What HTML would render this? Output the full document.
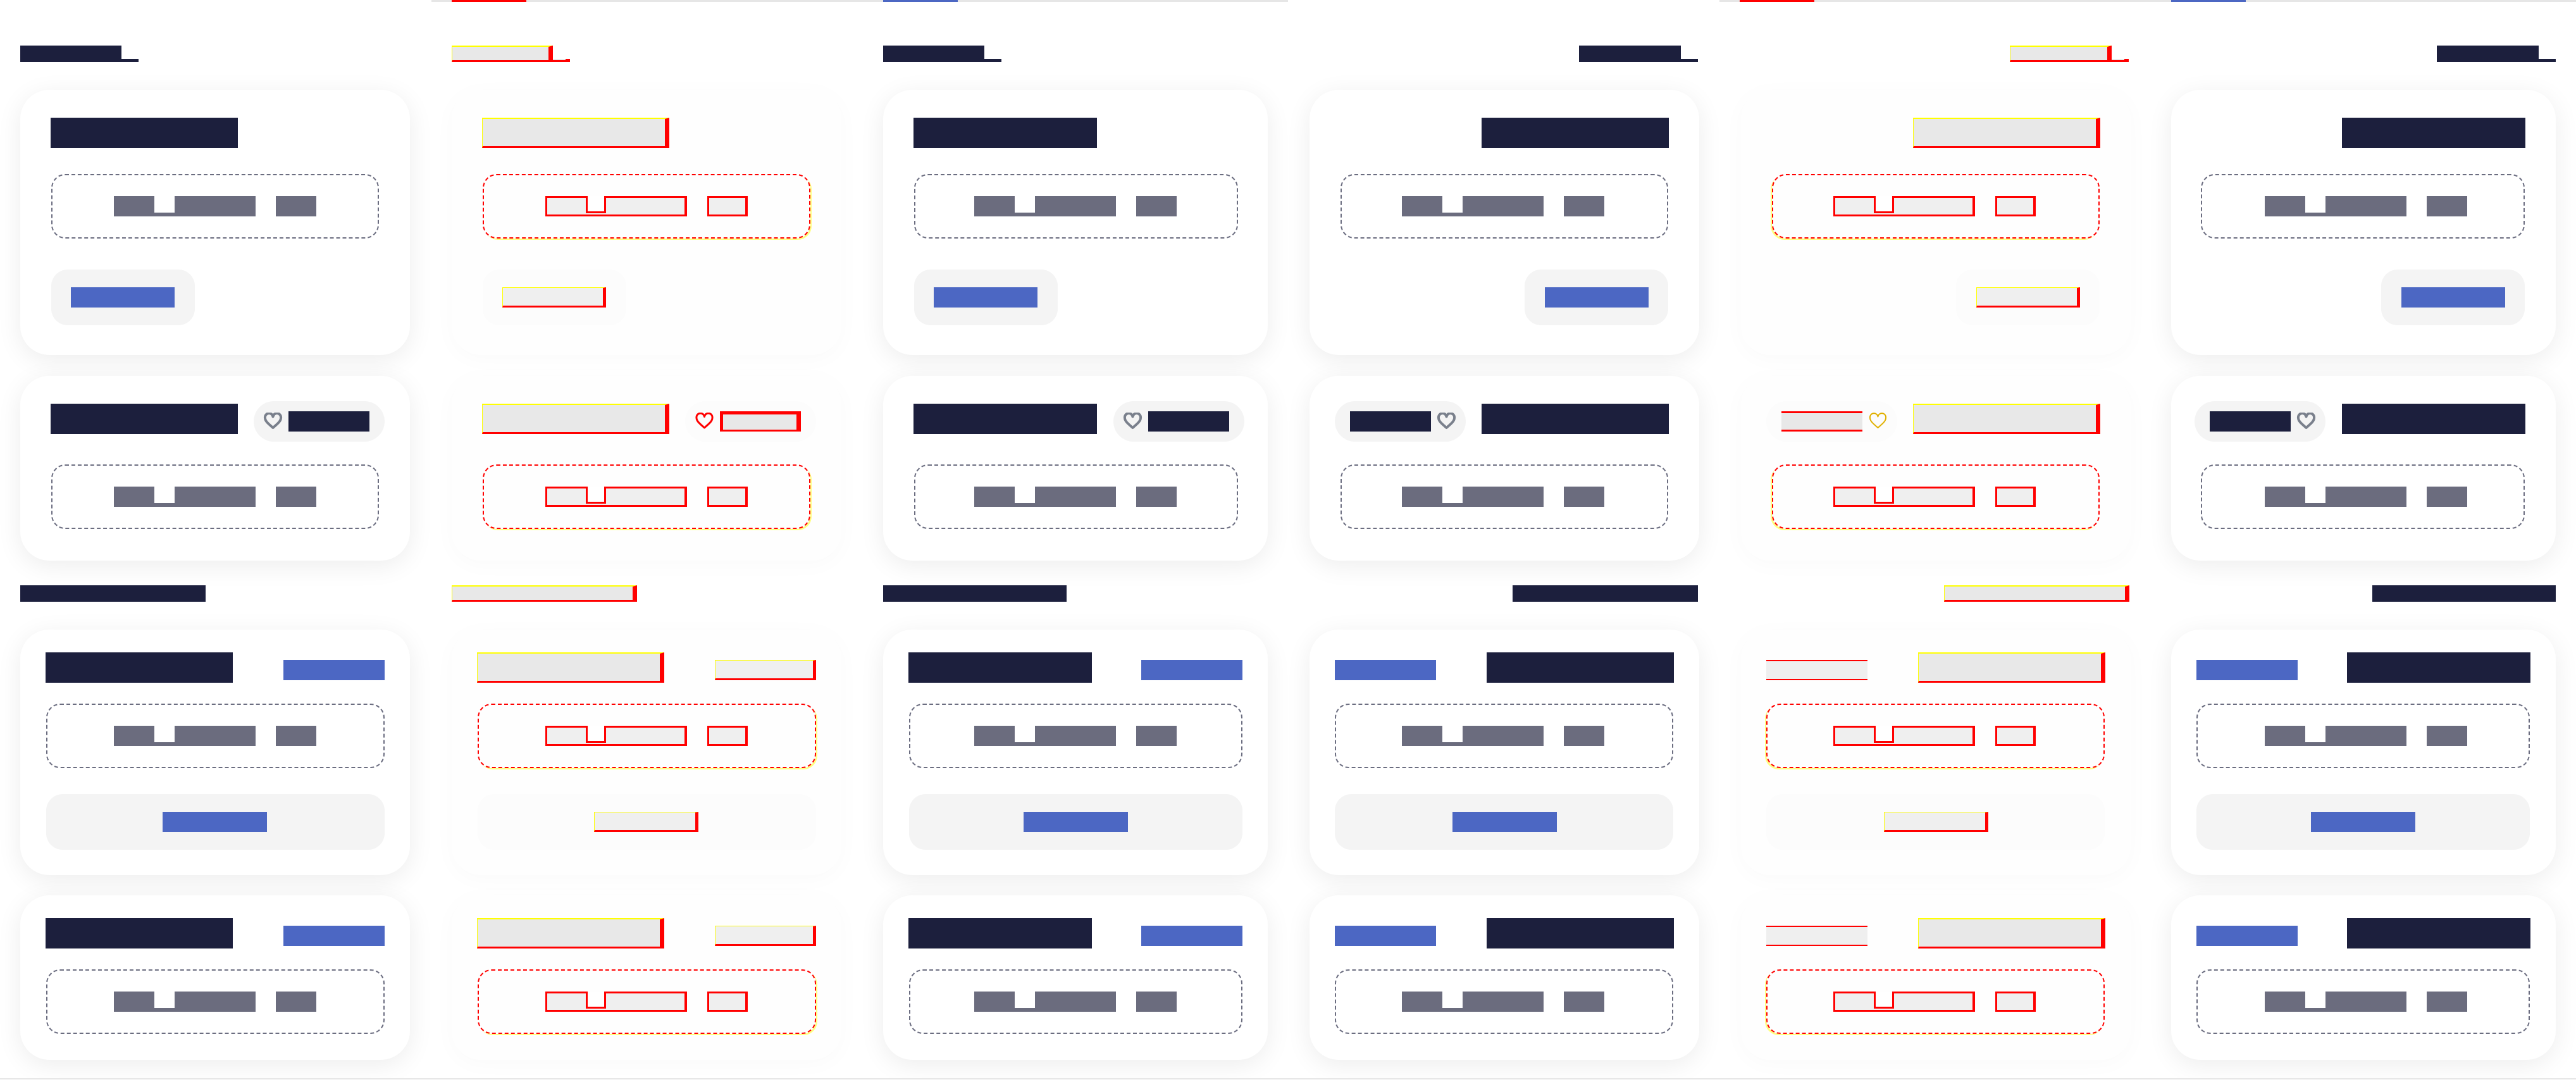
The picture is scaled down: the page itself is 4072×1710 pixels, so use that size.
<!DOCTYPE html>
<html><head><style>
*{box-sizing:border-box;margin:0;padding:0}
html,body{width:4072px;height:1710px;background:#fff;overflow:hidden;position:relative}
.p{position:absolute;top:0;height:1706px;width:682px;background:#fff;overflow:hidden;border-bottom:2px solid #e6e6e6}
.p>div,.p .c>div{position:absolute}
.rtl{transform:scaleX(-1)}
.rtl .l{transform:scaleX(-1)}
.top{top:0;left:0;width:100%;height:3px;background:#e6e6e6}
.top i{position:absolute;left:32px;top:0;width:118px;height:3px}
.h{background:#1c1f3d}
.tail{background:#1c1f3d}
.card{background:#fff;border-radius:46px;box-shadow:0 8px 40px rgba(0,0,0,.075)}
.t{background:#1c1f3d}
.ds{border:2px dashed #6b6d80;border-radius:22px}
.ba{background:#6b6c7e}
.ba b{position:absolute;left:64px;top:0;width:32px;height:26px;background:#fff}
.bb{background:#6b6c7e}
.btn{background:#f4f4f4;border-radius:26px}
.bl{background:#4c67c3}
.pill{background:#f4f4f4;border-radius:32px}
.dk{background:#1c1f3d}
.hrt{width:31px;height:27px}
.hrt path{stroke:#7a808c}
.d .h,.d .t,.d .tail{background:#e8e8e8;border-top:2px solid #ff0;border-left:1px solid #ff0;border-right:7px solid #f00;border-bottom:3px solid #f00}
.d .tail{border-left:none;border-top:none}
.d .card{box-shadow:0 6px 36px rgba(0,0,0,.025);background:#fefefe}
.d .ds{border:2px dashed #f00;box-shadow:2px 2px 0 0 rgba(255,255,0,.5)}
.d .ba,.d .bb{background:#efefef;border:3px solid #f00;border-right-width:4px}
.d .ba b{left:61px;top:-3px;height:27px;width:32px;border:3px solid #f00;border-top:none;background:#fff}
.d .btn,.d .pill{background:#fcfcfc}
.d .bl{background:#efefef;border-top:1px solid #ff0;border-left:1px solid #ff0;border-bottom:3px solid #f00;border-right:5px solid #f00}
.d .dk{background:#e8e8e8;border:3px solid #f00;border-top:5px solid #f00;border-left:5px solid #f00;border-right:7px solid #f00}
.d .hrt path{stroke:#f00}
</style></head><body>

<div class="p" style="left:0">
 <div class="l h" style="left:32px;top:72px;width:160px;height:26px"></div>
 <div class="l tail" style="left:192px;top:93px;width:27px;height:5px"></div>
 <div class="card" style="left:32px;top:142px;width:616px;height:419px"></div>
 <div class="l t" style="left:80px;top:186px;width:296px;height:48px"></div>
 <div class="ds" style="left:81px;top:275px;width:518px;height:102px"></div>
 <div class="l ba" style="left:180px;top:310px;width:224px;height:32px"><b></b></div>
 <div class="l bb" style="left:436px;top:310px;width:64px;height:32px"></div>
 <div class="btn" style="left:81px;top:426px;width:227px;height:88px"></div>
 <div class="l bl" style="left:112px;top:454px;width:164px;height:32px"></div>
 <div class="card" style="left:32px;top:594px;width:616px;height:292px"></div>
 <div class="l t" style="left:80px;top:638px;width:296px;height:48px"></div>
 <div class="pill" style="left:401px;top:634px;width:207px;height:64px"></div>
 <div style="left:416px;top:652px"><svg class="hrt" viewBox="0 0 31 27"><path d="M15.5 24 C8 17.5 3 13.5 3 8.5 A6 6 0 0 1 15.5 6.5 A6 6 0 0 1 28 8.5 C28 13.5 23 17.5 15.5 24Z" fill="none" stroke-width="4" stroke-linejoin="round"/></svg></div>
 <div class="l dk" style="left:456px;top:650px;width:128px;height:32px"></div>
 <div class="ds" style="left:81px;top:734px;width:518px;height:102px"></div>
 <div class="l ba" style="left:180px;top:769px;width:224px;height:32px"><b></b></div>
 <div class="l bb" style="left:436px;top:769px;width:64px;height:32px"></div>
 <div class="l h" style="left:32px;top:925px;width:293px;height:26px"></div>
 <div class="card" style="left:32px;top:995px;width:616px;height:388px"></div>
 <div class="l t" style="left:72px;top:1031px;width:296px;height:48px"></div>
 <div class="l bl" style="left:448px;top:1043px;width:160px;height:32px"></div>
 <div class="ds" style="left:73px;top:1112px;width:535px;height:102px"></div>
 <div class="l ba" style="left:180px;top:1147px;width:224px;height:32px"><b></b></div>
 <div class="l bb" style="left:436px;top:1147px;width:64px;height:32px"></div>
 <div class="btn" style="left:73px;top:1255px;width:535px;height:88px"></div>
 <div class="l bl" style="left:257px;top:1283px;width:165px;height:32px"></div>
 <div class="card" style="left:32px;top:1415px;width:616px;height:260px"></div>
 <div class="l t" style="left:72px;top:1451px;width:296px;height:48px"></div>
 <div class="l bl" style="left:448px;top:1463px;width:160px;height:32px"></div>
 <div class="ds" style="left:73px;top:1532px;width:535px;height:102px"></div>
 <div class="l ba" style="left:180px;top:1567px;width:224px;height:32px"><b></b></div>
 <div class="l bb" style="left:436px;top:1567px;width:64px;height:32px"></div>
</div>

<div class="p d" style="left:682px">
 <div class="top"><i style="background:#f00"></i></div>
 <div class="l h" style="left:32px;top:72px;width:160px;height:26px"></div>
 <div class="l tail" style="left:192px;top:93px;width:27px;height:5px"></div>
 <div class="card" style="left:32px;top:142px;width:616px;height:419px"></div>
 <div class="l t" style="left:80px;top:186px;width:296px;height:48px"></div>
 <div class="ds" style="left:81px;top:275px;width:518px;height:102px"></div>
 <div class="l ba" style="left:180px;top:310px;width:224px;height:32px"><b></b></div>
 <div class="l bb" style="left:436px;top:310px;width:64px;height:32px"></div>
 <div class="btn" style="left:81px;top:426px;width:227px;height:88px"></div>
 <div class="l bl" style="left:112px;top:454px;width:164px;height:32px"></div>
 <div class="card" style="left:32px;top:594px;width:616px;height:292px"></div>
 <div class="l t" style="left:80px;top:638px;width:296px;height:48px"></div>
 <div class="pill" style="left:401px;top:634px;width:207px;height:64px"></div>
 <div style="left:416px;top:652px"><svg class="hrt" viewBox="0 0 31 27"><path d="M15.5 24 C8 17.5 3 13.5 3 8.5 A6 6 0 0 1 15.5 6.5 A6 6 0 0 1 28 8.5 C28 13.5 23 17.5 15.5 24Z" fill="none" stroke-width="3" stroke-linejoin="round"/></svg></div>
 <div class="l dk" style="left:456px;top:650px;width:128px;height:32px"></div>
 <div class="ds" style="left:81px;top:734px;width:518px;height:102px"></div>
 <div class="l ba" style="left:180px;top:769px;width:224px;height:32px"><b></b></div>
 <div class="l bb" style="left:436px;top:769px;width:64px;height:32px"></div>
 <div class="l h" style="left:32px;top:925px;width:293px;height:26px"></div>
 <div class="card" style="left:32px;top:995px;width:616px;height:388px"></div>
 <div class="l t" style="left:72px;top:1031px;width:296px;height:48px"></div>
 <div class="l bl" style="left:448px;top:1043px;width:160px;height:32px"></div>
 <div class="ds" style="left:73px;top:1112px;width:535px;height:102px"></div>
 <div class="l ba" style="left:180px;top:1147px;width:224px;height:32px"><b></b></div>
 <div class="l bb" style="left:436px;top:1147px;width:64px;height:32px"></div>
 <div class="btn" style="left:73px;top:1255px;width:535px;height:88px"></div>
 <div class="l bl" style="left:257px;top:1283px;width:165px;height:32px"></div>
 <div class="card" style="left:32px;top:1415px;width:616px;height:260px"></div>
 <div class="l t" style="left:72px;top:1451px;width:296px;height:48px"></div>
 <div class="l bl" style="left:448px;top:1463px;width:160px;height:32px"></div>
 <div class="ds" style="left:73px;top:1532px;width:535px;height:102px"></div>
 <div class="l ba" style="left:180px;top:1567px;width:224px;height:32px"><b></b></div>
 <div class="l bb" style="left:436px;top:1567px;width:64px;height:32px"></div>
</div>

<div class="p" style="left:1364px;width:672px">
 <div class="top"><i style="background:#4c67c3"></i></div>
 <div class="l h" style="left:32px;top:72px;width:160px;height:26px"></div>
 <div class="l tail" style="left:192px;top:93px;width:27px;height:5px"></div>
 <div class="card" style="left:32px;top:142px;width:608px;height:419px"></div>
 <div class="l t" style="left:80px;top:186px;width:290px;height:48px"></div>
 <div class="ds" style="left:81px;top:275px;width:512px;height:102px"></div>
 <div class="l ba" style="left:176px;top:310px;width:224px;height:32px"><b></b></div>
 <div class="l bb" style="left:432px;top:310px;width:64px;height:32px"></div>
 <div class="btn" style="left:81px;top:426px;width:227px;height:88px"></div>
 <div class="l bl" style="left:112px;top:454px;width:164px;height:32px"></div>
 <div class="card" style="left:32px;top:594px;width:608px;height:292px"></div>
 <div class="l t" style="left:80px;top:638px;width:290px;height:48px"></div>
 <div class="pill" style="left:396px;top:634px;width:207px;height:64px"></div>
 <div style="left:411px;top:652px"><svg class="hrt" viewBox="0 0 31 27"><path d="M15.5 24 C8 17.5 3 13.5 3 8.5 A6 6 0 0 1 15.5 6.5 A6 6 0 0 1 28 8.5 C28 13.5 23 17.5 15.5 24Z" fill="none" stroke-width="4" stroke-linejoin="round"/></svg></div>
 <div class="l dk" style="left:451px;top:650px;width:128px;height:32px"></div>
 <div class="ds" style="left:81px;top:734px;width:512px;height:102px"></div>
 <div class="l ba" style="left:176px;top:769px;width:224px;height:32px"><b></b></div>
 <div class="l bb" style="left:432px;top:769px;width:64px;height:32px"></div>
 <div class="l h" style="left:32px;top:925px;width:290px;height:26px"></div>
 <div class="card" style="left:32px;top:995px;width:608px;height:388px"></div>
 <div class="l t" style="left:72px;top:1031px;width:290px;height:48px"></div>
 <div class="l bl" style="left:440px;top:1043px;width:160px;height:32px"></div>
 <div class="ds" style="left:73px;top:1112px;width:527px;height:102px"></div>
 <div class="l ba" style="left:176px;top:1147px;width:224px;height:32px"><b></b></div>
 <div class="l bb" style="left:432px;top:1147px;width:64px;height:32px"></div>
 <div class="btn" style="left:73px;top:1255px;width:527px;height:88px"></div>
 <div class="l bl" style="left:254px;top:1283px;width:165px;height:32px"></div>
 <div class="card" style="left:32px;top:1415px;width:608px;height:260px"></div>
 <div class="l t" style="left:72px;top:1451px;width:290px;height:48px"></div>
 <div class="l bl" style="left:440px;top:1463px;width:160px;height:32px"></div>
 <div class="ds" style="left:73px;top:1532px;width:527px;height:102px"></div>
 <div class="l ba" style="left:176px;top:1567px;width:224px;height:32px"><b></b></div>
 <div class="l bb" style="left:432px;top:1567px;width:64px;height:32px"></div>
</div>

<div class="p rtl" style="left:2036px">
 <div class="l h" style="left:61px;top:72px;width:161px;height:26px"></div>
 <div class="l tail" style="left:34px;top:93px;width:27px;height:5px"></div>
 <div class="card" style="left:32px;top:142px;width:616px;height:419px"></div>
 <div class="l t" style="left:80px;top:186px;width:296px;height:48px"></div>
 <div class="ds" style="left:81px;top:275px;width:518px;height:102px"></div>
 <div class="l ba" style="left:278px;top:310px;width:224px;height:32px"><b></b></div>
 <div class="l bb" style="left:182px;top:310px;width:64px;height:32px"></div>
 <div class="btn" style="left:81px;top:426px;width:227px;height:88px"></div>
 <div class="l bl" style="left:112px;top:454px;width:164px;height:32px"></div>
 <div class="card" style="left:32px;top:594px;width:616px;height:292px"></div>
 <div class="l t" style="left:80px;top:638px;width:296px;height:48px"></div>
 <div class="pill" style="left:401px;top:634px;width:207px;height:64px"></div>
 <div style="left:416px;top:652px"><svg class="hrt" viewBox="0 0 31 27"><path d="M15.5 24 C8 17.5 3 13.5 3 8.5 A6 6 0 0 1 15.5 6.5 A6 6 0 0 1 28 8.5 C28 13.5 23 17.5 15.5 24Z" fill="none" stroke-width="4" stroke-linejoin="round"/></svg></div>
 <div class="l dk" style="left:456px;top:650px;width:128px;height:32px"></div>
 <div class="ds" style="left:81px;top:734px;width:518px;height:102px"></div>
 <div class="l ba" style="left:278px;top:769px;width:224px;height:32px"><b></b></div>
 <div class="l bb" style="left:182px;top:769px;width:64px;height:32px"></div>
 <div class="l h" style="left:34px;top:925px;width:293px;height:26px"></div>
 <div class="card" style="left:32px;top:995px;width:616px;height:388px"></div>
 <div class="l t" style="left:72px;top:1031px;width:296px;height:48px"></div>
 <div class="l bl" style="left:448px;top:1043px;width:160px;height:32px"></div>
 <div class="ds" style="left:73px;top:1112px;width:535px;height:102px"></div>
 <div class="l ba" style="left:278px;top:1147px;width:224px;height:32px"><b></b></div>
 <div class="l bb" style="left:182px;top:1147px;width:64px;height:32px"></div>
 <div class="btn" style="left:73px;top:1255px;width:535px;height:88px"></div>
 <div class="l bl" style="left:257px;top:1283px;width:165px;height:32px"></div>
 <div class="card" style="left:32px;top:1415px;width:616px;height:260px"></div>
 <div class="l t" style="left:72px;top:1451px;width:296px;height:48px"></div>
 <div class="l bl" style="left:448px;top:1463px;width:160px;height:32px"></div>
 <div class="ds" style="left:73px;top:1532px;width:535px;height:102px"></div>
 <div class="l ba" style="left:278px;top:1567px;width:224px;height:32px"><b></b></div>
 <div class="l bb" style="left:182px;top:1567px;width:64px;height:32px"></div>
</div>

<div class="p d rtl" style="left:2718px">
 <div class="top"><i style="background:#f00;left:auto;right:32px"></i></div>
 <div class="l h" style="left:62px;top:72px;width:161px;height:26px"></div>
 <div class="l tail" style="left:35px;top:93px;width:27px;height:5px"></div>
 <div class="card" style="left:32px;top:142px;width:616px;height:419px"></div>
 <div class="l t" style="left:80px;top:186px;width:296px;height:48px"></div>
 <div class="ds" style="left:81px;top:275px;width:518px;height:102px"></div>
 <div class="l ba" style="left:278px;top:310px;width:224px;height:32px"><b></b></div>
 <div class="l bb" style="left:182px;top:310px;width:64px;height:32px"></div>
 <div class="btn" style="left:81px;top:426px;width:227px;height:88px"></div>
 <div class="l bl" style="left:112px;top:454px;width:164px;height:32px"></div>
 <div class="card" style="left:32px;top:594px;width:616px;height:292px"></div>
 <div class="l t" style="left:80px;top:638px;width:296px;height:48px"></div>
 <div class="pill" style="left:401px;top:634px;width:207px;height:64px"></div>
 <div style="left:416px;top:652px"><svg class="hrt" viewBox="0 0 31 27"><path d="M15.5 24 C8 17.5 3 13.5 3 8.5 A6 6 0 0 1 15.5 6.5 A6 6 0 0 1 28 8.5 C28 13.5 23 17.5 15.5 24Z" fill="none" stroke-width="2" stroke-linejoin="round" style="stroke:#e0b000"/></svg></div>
 <div class="l dk" style="left:456px;top:650px;width:128px;height:32px;border-left:none;border-right:none;border-top-width:3px"></div>
 <div class="ds" style="left:81px;top:734px;width:518px;height:102px"></div>
 <div class="l ba" style="left:278px;top:769px;width:224px;height:32px"><b></b></div>
 <div class="l bb" style="left:182px;top:769px;width:64px;height:32px"></div>
 <div class="l h" style="left:34px;top:925px;width:293px;height:26px"></div>
 <div class="card" style="left:32px;top:995px;width:616px;height:388px"></div>
 <div class="l t" style="left:72px;top:1031px;width:296px;height:48px"></div>
 <div class="l bl" style="left:448px;top:1043px;width:160px;height:32px;border:none;border-top:2px solid #f00;border-bottom:2px solid #f00"></div>
 <div class="ds" style="left:73px;top:1112px;width:535px;height:102px"></div>
 <div class="l ba" style="left:278px;top:1147px;width:224px;height:32px"><b></b></div>
 <div class="l bb" style="left:182px;top:1147px;width:64px;height:32px"></div>
 <div class="btn" style="left:73px;top:1255px;width:535px;height:88px"></div>
 <div class="l bl" style="left:257px;top:1283px;width:165px;height:32px"></div>
 <div class="card" style="left:32px;top:1415px;width:616px;height:260px"></div>
 <div class="l t" style="left:72px;top:1451px;width:296px;height:48px"></div>
 <div class="l bl" style="left:448px;top:1463px;width:160px;height:32px;border:none;border-top:2px solid #f00;border-bottom:2px solid #f00"></div>
 <div class="ds" style="left:73px;top:1532px;width:535px;height:102px"></div>
 <div class="l ba" style="left:278px;top:1567px;width:224px;height:32px"><b></b></div>
 <div class="l bb" style="left:182px;top:1567px;width:64px;height:32px"></div>
</div>

<div class="p rtl" style="left:3400px;width:672px">
 <div class="top"><i style="background:#4c67c3;left:auto;right:32px"></i></div>
 <div class="l h" style="left:59px;top:72px;width:161px;height:26px"></div>
 <div class="l tail" style="left:32px;top:93px;width:27px;height:5px"></div>
 <div class="card" style="left:32px;top:142px;width:608px;height:419px"></div>
 <div class="l t" style="left:80px;top:186px;width:290px;height:48px"></div>
 <div class="ds" style="left:81px;top:275px;width:512px;height:102px"></div>
 <div class="l ba" style="left:268px;top:310px;width:224px;height:32px"><b></b></div>
 <div class="l bb" style="left:172px;top:310px;width:64px;height:32px"></div>
 <div class="btn" style="left:81px;top:426px;width:227px;height:88px"></div>
 <div class="l bl" style="left:112px;top:454px;width:164px;height:32px"></div>
 <div class="card" style="left:32px;top:594px;width:608px;height:292px"></div>
 <div class="l t" style="left:80px;top:638px;width:290px;height:48px"></div>
 <div class="pill" style="left:396px;top:634px;width:207px;height:64px"></div>
 <div style="left:411px;top:652px"><svg class="hrt" viewBox="0 0 31 27"><path d="M15.5 24 C8 17.5 3 13.5 3 8.5 A6 6 0 0 1 15.5 6.5 A6 6 0 0 1 28 8.5 C28 13.5 23 17.5 15.5 24Z" fill="none" stroke-width="4" stroke-linejoin="round"/></svg></div>
 <div class="l dk" style="left:451px;top:650px;width:128px;height:32px"></div>
 <div class="ds" style="left:81px;top:734px;width:512px;height:102px"></div>
 <div class="l ba" style="left:268px;top:769px;width:224px;height:32px"><b></b></div>
 <div class="l bb" style="left:172px;top:769px;width:64px;height:32px"></div>
 <div class="l h" style="left:32px;top:925px;width:290px;height:26px"></div>
 <div class="card" style="left:32px;top:995px;width:608px;height:388px"></div>
 <div class="l t" style="left:72px;top:1031px;width:290px;height:48px"></div>
 <div class="l bl" style="left:440px;top:1043px;width:160px;height:32px"></div>
 <div class="ds" style="left:73px;top:1112px;width:527px;height:102px"></div>
 <div class="l ba" style="left:268px;top:1147px;width:224px;height:32px"><b></b></div>
 <div class="l bb" style="left:172px;top:1147px;width:64px;height:32px"></div>
 <div class="btn" style="left:73px;top:1255px;width:527px;height:88px"></div>
 <div class="l bl" style="left:254px;top:1283px;width:165px;height:32px"></div>
 <div class="card" style="left:32px;top:1415px;width:608px;height:260px"></div>
 <div class="l t" style="left:72px;top:1451px;width:290px;height:48px"></div>
 <div class="l bl" style="left:440px;top:1463px;width:160px;height:32px"></div>
 <div class="ds" style="left:73px;top:1532px;width:527px;height:102px"></div>
 <div class="l ba" style="left:268px;top:1567px;width:224px;height:32px"><b></b></div>
 <div class="l bb" style="left:172px;top:1567px;width:64px;height:32px"></div>
</div>

</body></html>
